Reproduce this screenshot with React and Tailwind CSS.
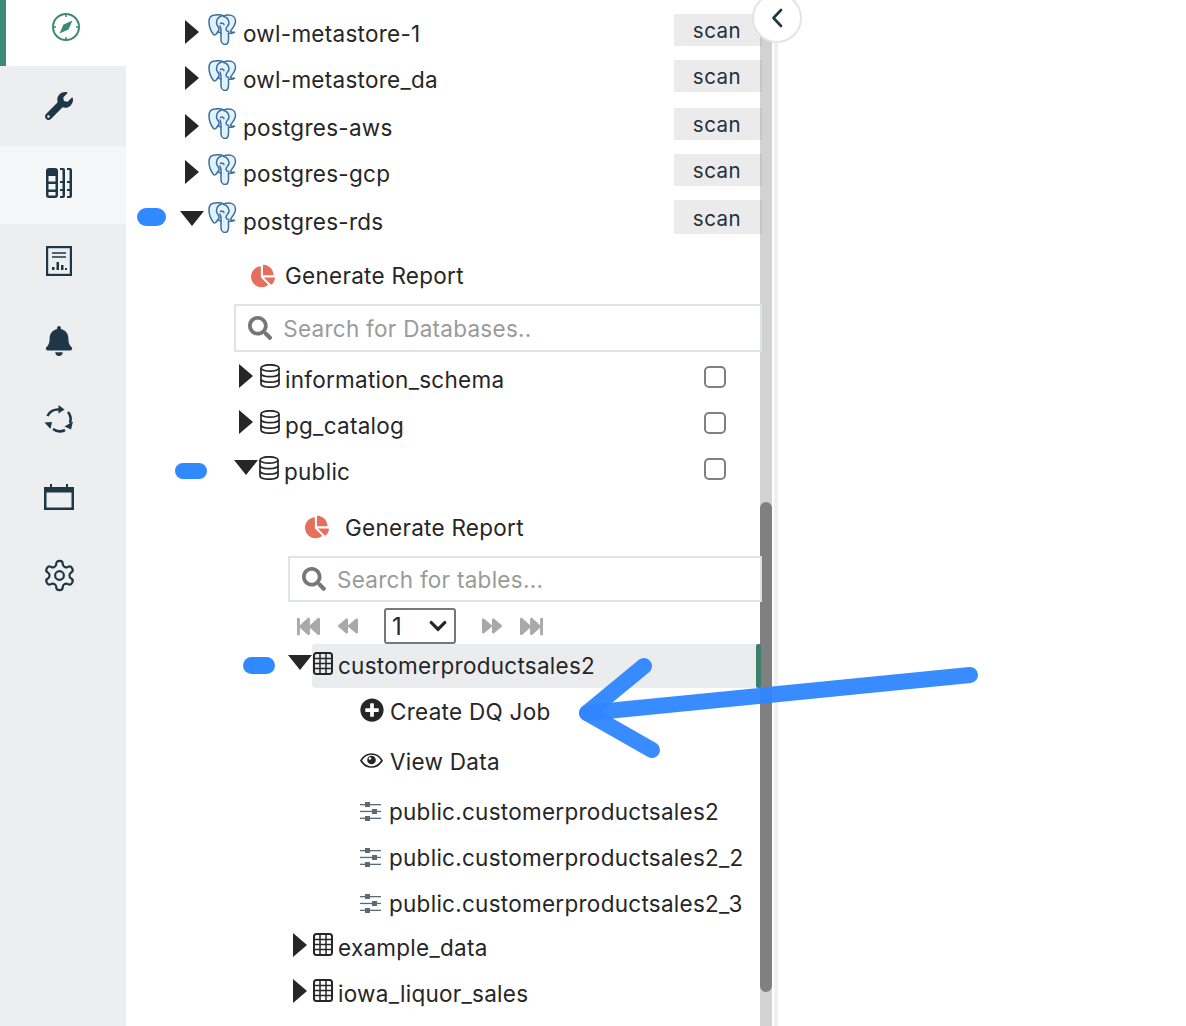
import React from 'react';
import { FaBell, FaChartPie, FaChevronDown, FaFastBackward, FaFastForward, FaBackward, FaForward, FaPlusCircle, FaSearch, FaWrench } from 'react-icons/fa';

const navColor = '#1e3747';

function Compass() {
  return (
    <svg width="30" height="30" viewBox="0 0 30 30" fill="none" stroke="#3d8a72">
      <circle cx="15" cy="15" r="13" strokeWidth="2" />
      <path d="M15 2v3M15 25v3M2 15h3M25 15h3" strokeWidth="1.500" />
      <path d="M21.500 8.500L17.500 17.500 8.500 21.500 12.500 12.500z" fill="#3d8a72" stroke="none" />
    </svg>
  );
}
function Columns() {
  return (
    <svg width="26" height="30" viewBox="0 0 26 30" fill={navColor}>
      <path fillRule="evenodd" d="M3 0h6a3 3 0 0 1 3 3v24a3 3 0 0 1-3 3H3a3 3 0 0 1-3-3V3a3 3 0 0 1 3-3zM2.500 8v5.500h7V8zm0 8v5.500h7V16zm0 8v3.500h7V24z" />
      <path d="M14 0h3a2 2 0 0 1 2 2v26a2 2 0 0 1-2 2h-3v-2h2.500v-5H14v-2h2.500v-6H14v-2h2.500V2H14z" />
      <path d="M21 0h3a2 2 0 0 1 2 2v26a2 2 0 0 1-2 2h-3v-2h2.500v-5H21v-2h2.500v-6H21v-2h2.500V2H21z" />
    </svg>
  );
}
function ReportIcon() {
  return (
    <svg width="26" height="30" viewBox="0 0 26 30" fill="none" stroke={navColor}>
      <rect x="1" y="1" width="24" height="28" strokeWidth="2.400" />
      <path d="M6 7h14M6 11h14" strokeWidth="1.400" />
      <path d="M6 24v-3h2.500v3zM10.500 24v-8H13v8zM15 24v-5h2.500v5zM19 24v-2h2v2z" fill={navColor} stroke="none" />
    </svg>
  );
}
function Recycle() {
  return (
    <svg width="30" height="30" viewBox="0 0 30 30" fill="none" stroke={navColor} strokeWidth="2.600">
      <path d="M3.500 12A11.500 11.500 0 0 1 15 5.500" />
      <path d="M14.500 1l6 4.500-6 4z" fill={navColor} stroke="none" />
      <path d="M24 8a11.500 11.500 0 0 1 2 11" />
      <path d="M29 17.500l-2 8-6.500-3z" fill={navColor} stroke="none" />
      <path d="M21 26a11.500 11.500 0 0 1-12 -1" />
      <path d="M0.500 18.500l7.500-.5-1.500 7z" fill={navColor} stroke="none" />
    </svg>
  );
}
function Calendar() {
  return (
    <svg width="30" height="26" viewBox="0 0 30 26" fill={navColor}>
      <path fillRule="evenodd" d="M0 3h6V0h2v3h14V0h2v3h6v23H0zM2.500 8.500v15h25v-15z" />
    </svg>
  );
}
function Gear() {
  return (
    <svg width="35" height="35" viewBox="0 0 24 24" fill="none" stroke={navColor} strokeWidth="1.500" strokeLinejoin="round">
      <path d="M12.220 2h-.44a2 2 0 0 0-2 2v.18a2 2 0 0 1-1 1.730l-.43.250a2 2 0 0 1-2 0l-.15-.08a2 2 0 0 0-2.730.730l-.22.380a2 2 0 0 0 .730 2.730l.15.100a2 2 0 0 1 1 1.720v.510a2 2 0 0 1-1 1.740l-.15.090a2 2 0 0 0-.730 2.730l.22.380a2 2 0 0 0 2.730.730l.15-.08a2 2 0 0 1 2 0l.43.250a2 2 0 0 1 1 1.730V20a2 2 0 0 0 2 2h.44a2 2 0 0 0 2-2v-.18a2 2 0 0 1 1-1.730l.43-.250a2 2 0 0 1 2 0l.15.080a2 2 0 0 0 2.730-.730l.22-.390a2 2 0 0 0-.730-2.730l-.15-.080a2 2 0 0 1-1-1.740v-.500a2 2 0 0 1 1-1.740l.15-.090a2 2 0 0 0 .730-2.730l-.22-.380a2 2 0 0 0-2.730-.730l-.15.080a2 2 0 0 1-2 0l-.43-.250a2 2 0 0 1-1-1.730V4a2 2 0 0 0-2-2z" />
      <circle cx="12" cy="12" r="3" />
    </svg>
  );
}
function Elephant() {
  return (
    <svg width="29" height="31" viewBox="0 0 29 31" fill="#e3f1fb" stroke="#3b6f9e" strokeWidth="1.500" strokeLinejoin="round" strokeLinecap="round">
      <path d="M7 1C3 1 1 4 1 8c0 5 2.500 10 4.500 12.500 1.500 1.500 3-.5 4.500-3 1 1 2.500 1.500 3 1.500v6.500c0 3 2 5 4 5 2.500 0 3.500-2.500 3.500-5.500V19c2 .5 4.500.5 6-.8-1.800.3-3 0-4-1 1.500-2.500 5-6 5-10 0-4-3-6.200-7-6.200-2 0-3.500.3-4.500 1C14 1 11 .2 7 1z" />
      <path d="M13.500 2c-3 1-5 4-5 7 0 2.500 2 3 2.500 5.500.2 1.500-.5 2.500-1 3.500" fill="none" />
      <path d="M15.500 2.500c3 .5 5 3 5.500 6 .3 2-1.500 3.500-2.500 5-1 1.800-.5 3.500 2 4" fill="none" />
      <path d="M12.500 9.500c1.500-.8 3-.3 3.500 1" fill="none" />
      <path d="M13 19c.5-3 0-5-1-7" fill="none" />
    </svg>
  );
}
function Db() {
  return (
    <svg width="20" height="24" viewBox="0 0 20 24" fill="none" stroke="#262626" strokeWidth="1.700">
      <ellipse cx="10" cy="4" rx="9" ry="3.200" />
      <path d="M1 4v16c0 1.800 4 3.200 9 3.200s9-1.400 9-3.200V4" />
      <path d="M1 9.500c0 1.800 4 3.200 9 3.200s9-1.400 9-3.200M1 15c0 1.800 4 3.200 9 3.200s9-1.400 9-3.200" />
    </svg>
  );
}
function TableIcon() {
  return (
    <svg width="20" height="23" viewBox="0 0 20 23" fill="none" stroke="#262626">
      <rect x="1" y="1" width="18" height="21" rx="2.500" strokeWidth="2" />
      <path d="M1 6.500h18M1 11.500h18M1 16.500h18M7 2v20M13 2v20" strokeWidth="1.500" />
    </svg>
  );
}
function Sliders() {
  return (
    <svg width="21" height="19" viewBox="0 0 21 19" fill="#5a6b75">
      <rect x="0" y="2" width="21" height="1.300" />
      <rect x="5" y="0" width="5" height="5" />
      <rect x="0" y="8.800" width="21" height="1.300" />
      <rect x="12" y="7" width="5" height="5" />
      <rect x="0" y="15.700" width="21" height="1.300" />
      <rect x="5" y="14" width="5" height="5" />
    </svg>
  );
}
function Eye() {
  return (
    <svg width="23" height="15" viewBox="0 0 23 15" fill="none" stroke="#262626" strokeWidth="1.700">
      <path d="M1 7.500C3.500 3.200 7 1 11.500 1S19.500 3.200 22 7.500C19.500 11.800 16 14 11.500 14S3.500 11.800 1 7.500z" />
      <circle cx="11.500" cy="7" r="4.300" fill="#262626" stroke="none" />
      <circle cx="10" cy="5.500" r="1.300" fill="#fff" stroke="none" />
    </svg>
  );
}
const Caret = ({ open }) => open
  ? <svg width="24" height="15" viewBox="0 0 24 15" fill="#262626"><path d="M0 0h24L12 15z" /></svg>
  : <svg width="14" height="24" viewBox="0 0 14 24" fill="#262626"><path d="M0 0l14 12L0 24z" /></svg>;

const Scan = ({ tall }) => (
  <button className={`relative z-10 ml-auto mr-[-2px] w-[88px] border-r-2 border-[#c6c6c6] bg-[#ebebeb] text-[20.500px] leading-none text-[#1b3242] tracking-[0.5px] ${tall ? 'h-[34px] mt-[-8px] pt-[4px]' : 'h-[32px] mt-[-6px] pt-[2px]'}`}>scan</button>
);

const navItems = [
  { cls: 'h-[66px] bg-white border-l-[6px] border-[#3d8a72] pb-[12px]', icon: <Compass /> },
  { cls: 'h-[80px] bg-[#eceef0] pr-[8px]', icon: <FaWrench size={28} color={navColor} /> },
  { cls: 'h-[78px] bg-[#f5f6f8] pb-[4px] pr-[8px]', icon: <Columns /> },
  { cls: 'h-[78px] pb-[4px] pr-[8px]', icon: <ReportIcon /> },
  { cls: 'h-[78px] pr-[8px]', icon: <FaBell size={30} color={navColor} /> },
  { cls: 'h-[78px] pr-[8px]', icon: <Recycle /> },
  { cls: 'h-[78px] pr-[8px]', icon: <Calendar /> },
  { cls: 'h-[78px] pr-[8px]', icon: <Gear /> },
];

const Row = ({ mt = '', h = 'h-[46px]', pl, children }) => (
  <div className={`flex items-center ${h} ${mt} ${pl}`}>{children}</div>
);

const Label = ({ className = '', children }) => (
  <span className={`pt-[2px] text-[22.500px] leading-none text-[#262626] tracking-[0.27px] whitespace-nowrap ${className}`}>{children}</span>
);

function Connection({ name, open, mt }) {
  return (
    <Row mt={mt} pl={open ? 'pl-[54px]' : 'pl-[59px]'}>
      <span className={open ? 'mt-[-5px]' : 'mt-[-2px]'}><Caret open={open} /></span>
      <span className={`mt-[-8px] ${open ? 'ml-[4px]' : 'ml-[9px]'}`}><Elephant /></span>
      <Label className="ml-[6px]">{name}</Label>
      <Scan tall={open} />
    </Row>
  );
}

function DbRow({ name, open, mt }) {
  return (
    <Row mt={mt} pl={open ? 'pl-[108px]' : 'pl-[113px]'}>
      <span className={open ? 'mt-[-8px]' : 'mt-[-6px]'}><Caret open={open} /></span>
      <span className={`mt-[-6px] ${open ? 'ml-[1px]' : 'ml-[7px]'}`}><Db /></span>
      <Label className="ml-[5px]">{name}</Label>
      <span className="ml-auto mr-[34px] mt-[-4px] h-[22px] w-[22px] rounded-[5px] border-2 border-[#808080] bg-white" />
    </Row>
  );
}

function TblRow({ name, mt, h }) {
  return (
    <Row mt={mt} h={h} pl="pl-[167px]">
      <span className="mt-[-4px]"><Caret /></span>
      <span className="ml-[6px] mt-[-6px]"><TableIcon /></span>
      <Label className="ml-[5px]">{name}</Label>
    </Row>
  );
}

const Job = ({ name, mt }) => (
  <Row mt={mt} pl="pl-[234px]">
    <span><Sliders /></span>
    <Label className="ml-[8px]">{name}</Label>
  </Row>
);

function Search({ ml, h, ph, mt }) {
  return (
    <div className={`relative z-10 flex items-center ${mt} ${ml} ${h} mr-[-2px] border-2 border-[#dfe3e6] bg-white pl-[12px]`}>
      <FaSearch size={26} color="#777" />
      <input placeholder={ph} className="ml-[11px] mt-[2px] w-full bg-transparent text-[22.500px] tracking-[0.27px] outline-none placeholder:text-[#9a9a9a]" />
    </div>
  );
}

const Blob = ({ cls }) => <span className={`absolute z-20 rounded-full bg-[#3189ff] ${cls}`} />;

export default function App() {
  return (
    <div className="relative flex h-[1026px] w-[1186px] overflow-hidden bg-white" style={{ fontFamily: 'Inter, "Liberation Sans", sans-serif' }}>
      <nav className="flex h-full w-[126px] shrink-0 flex-col bg-[#eceef0]">
        {navItems.map((it, i) => (
          <div key={i} className={`flex items-center justify-center ${it.cls}`}>{it.icon}</div>
        ))}
      </nav>

      <main className="w-[634px] shrink-0 pt-[10px]">
        <Connection name="owl-metastore-1" />
        <Connection name="owl-metastore_da" />
        <Connection name="postgres-aws" mt="mt-[2px]" />
        <Connection name="postgres-gcp" />
        <Connection name="postgres-rds" open mt="mt-[2px]" />

        <Row mt="mt-[9px]" pl="pl-[125px]">
          <FaChartPie size={24} color="#e56e5c" />
          <Label className="ml-[10px] mt-[-2px]">Generate Report</Label>
        </Row>
        <Search mt="mt-[5px]" ml="ml-[108px]" h="h-[48px]" ph="Search for Databases.." />

        <DbRow name="information_schema" mt="mt-[4px]" />
        <DbRow name="pg_catalog" />
        <DbRow name="public" open />

        <Row mt="mt-[10px]" pl="pl-[179px]">
          <FaChartPie size={24} color="#e56e5c" />
          <Label className="ml-[16px]">Generate Report</Label>
        </Row>
        <Search mt="mt-[6px]" ml="ml-[162px]" h="h-[46px]" ph="Search for tables..." />

        <div className="mt-[6px] flex h-[36px] items-center pl-[171px] text-[#a9a9a9]">
          <FaFastBackward size={23} />
          <FaBackward size={20} className="ml-[18px]" />
          <div className="ml-[26px] flex h-[36px] w-[72px] items-center justify-between rounded-[3px] border-2 border-[#777] pl-[6px] pr-[6px]">
            <span className="mt-[2px] text-[24px] leading-none text-[#262626]">1</span>
            <FaChevronDown size={20} color="#262626" />
          </div>
          <FaForward size={20} className="ml-[26px]" />
          <FaFastForward size={23} className="ml-[18px]" />
        </div>

        <div className="flex h-[44px] items-center pl-[162px]">
          <span className="mt-[-8px]"><Caret open /></span>
          <div className="flex h-full flex-1 items-center rounded-l-[4px] bg-[#ebecee]">
            <span className="ml-[1px] mt-[-6px]"><TableIcon /></span>
            <Label className="ml-[5px] mt-[-2px]">customerproductsales2</Label>
            <span className="relative z-10 ml-auto mr-[-1px] h-full w-[5px] rounded-[2px] bg-[#3d7f6c]" />
          </div>
        </div>

        <Row mt="mt-[1px]" pl="pl-[234px]">
          <span className="mt-[-5px]"><FaPlusCircle size={24} color="#262626" /></span>
          <Label className="ml-[6px] mt-[-2px]">Create DQ Job</Label>
        </Row>
        <Row mt="mt-[4px]" pl="pl-[234px]">
          <span className="mt-[-4px]"><Eye /></span>
          <Label className="ml-[7px] mt-[-2px]">View Data</Label>
        </Row>
        <Job name="public.customerproductsales2" mt="mt-[3px]" />
        <Job name="public.customerproductsales2_2" />
        <Job name="public.customerproductsales2_3" />
        <TblRow name="example_data" mt="mt-[-2px]" />
        <TblRow name="iowa_liquor_sales" />
      </main>

      <div className="relative h-full w-[12px] shrink-0 bg-[#d2d2d2]">
        <div className="absolute left-0 right-0 top-[502px] h-[490px] rounded-full bg-[#808080]" />
      </div>
      <div className="ml-[2px] h-full w-[4px] shrink-0 bg-[#f0f0f0]" />

      <button className="absolute left-[752px] top-[-7px] z-20 flex h-[50px] w-[50px] items-center justify-center rounded-full border-2 border-[#e4e4e4] bg-white">
        <svg width="12" height="20" viewBox="0 0 12 20" fill="none" stroke={navColor} strokeWidth="2.600" strokeLinecap="round" strokeLinejoin="round">
          <path d="M10 2L2.500 10L10 18" />
        </svg>
      </button>

      <Blob cls="left-[137px] top-[208px] h-[18px] w-[29px]" />
      <Blob cls="left-[175px] top-[463px] h-[16px] w-[32px]" />
      <Blob cls="left-[243px] top-[657px] h-[17px] w-[32px]" />

      <svg className="absolute left-0 top-0 z-30" width="1186" height="1026" fill="none" stroke="#2e86ff" strokeOpacity="0.95" strokeWidth="16" strokeLinecap="round" strokeLinejoin="round">
        <path d="M970 675L587 713" />
        <path d="M644 666L587 713L652 750" />
      </svg>
    </div>
  );
}
